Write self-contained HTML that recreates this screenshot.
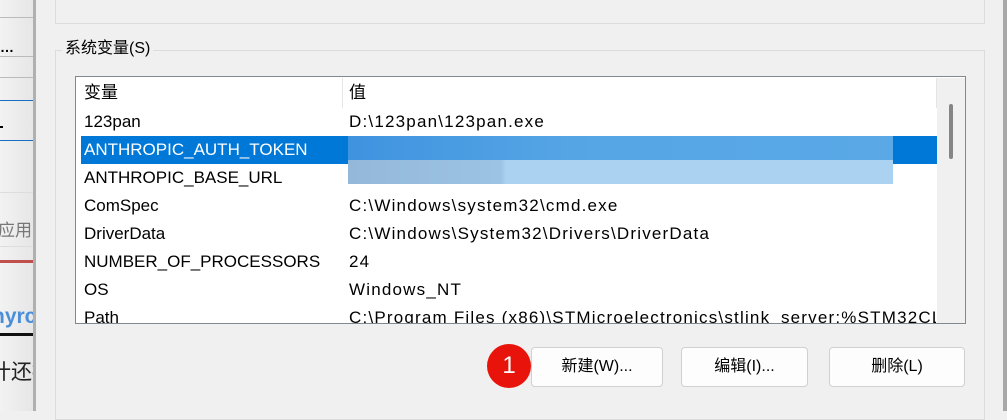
<!DOCTYPE html>
<html><head><meta charset="utf-8"><style>
*{margin:0;padding:0;box-sizing:border-box}
body{width:1007px;height:411px;overflow:hidden;background:#f0f0f0;position:relative;font-family:"Liberation Sans","Noto Sans CJK SC",sans-serif;color:#000}
.a{position:absolute}
.row{position:absolute;left:84px;font-size:17px;line-height:28px;white-space:nowrap}
.v{left:349px;letter-spacing:1.2px}
.btn{position:absolute;top:347px;height:40px;background:#fdfdfd;border:1px solid #d0d0d0;border-radius:4px;font-size:16px;text-align:center;line-height:38px}
</style></head><body>
<!-- left strip -->
<div class="a" style="left:0;top:0;width:34px;height:411px;overflow:hidden;background:linear-gradient(90deg,#f2f2f2,#e6e6e6)">
<div class="a" style="left:0;top:17px;width:34px;height:1px;background:#bbb"></div>
<div class="a" style="left:0;top:39px;font-size:14px;font-weight:bold">…</div>
<div class="a" style="left:0;top:56px;width:34px;height:1px;background:#bbb"></div>
<div class="a" style="left:0;top:77px;width:34px;height:1px;background:#bbb"></div>
<div class="a" style="left:0;top:100px;width:34px;height:1px;background:#1a6fc4"></div>
<div class="a" style="left:0;top:126px;width:3px;height:2px;background:#000"></div>
<div class="a" style="left:0;top:140px;width:34px;height:1px;background:#1a6fc4"></div>
<div class="a" style="left:0;top:192px;width:34px;height:1px;background:#ddd"></div>
<div class="a" style="left:-2px;top:216px;font-size:17px;color:#777;white-space:nowrap">应用</div>
<div class="a" style="left:0;top:246px;width:34px;height:1px;background:#ddd"></div>
<div class="a" style="left:0;top:260px;width:34px;height:3px;background:#c0504d"></div>
<div class="a" style="left:-8px;top:305px;font-size:21px;font-weight:bold;color:#4a8fd8;white-space:nowrap">hyrc</div>
<div class="a" style="left:0;top:333px;width:34px;height:3px;background:#111"></div>
<div class="a" style="left:-10px;top:356px;font-size:21px;color:#222;white-space:nowrap">计还损</div>
</div>
<div class="a" style="left:33px;top:0;width:3px;height:411px;background:#b0b0b0"></div>
<!-- right edge -->
<div class="a" style="left:1003px;top:0;width:4px;height:411px;background:#a8a8a8"></div>
<!-- upper group box -->
<div class="a" style="left:55px;top:-5px;width:930px;height:29px;border:1px solid #dcdcdc"></div>
<!-- system group -->
<div class="a" style="left:55px;top:50px;width:930px;height:370px;border:1px solid #dcdcdc"></div>
<div class="a" style="left:62px;top:38px;padding:0 3px;background:#f0f0f0;font-size:16px;line-height:22px">系统变量(S)</div>
<!-- listbox -->
<div class="a" style="left:75px;top:76px;width:891px;height:248px;border:1px solid #828790;background:#fff;overflow:hidden">
 <div class="a" style="left:266px;top:1px;width:1px;height:30px;background:#e5e5e5"></div>
 <div class="a" style="left:861px;top:1px;width:28px;height:246px;background:#f0f0f0"></div>
 <div class="a" style="left:860px;top:1px;width:1px;height:30px;background:#e5e5e5"></div>
 <div class="a" style="left:873px;top:27px;width:4px;height:55px;background:#858585;border-radius:2px"></div>
 <div class="a" style="left:5px;top:59px;width:856px;height:28px;background:#0078d7"></div>
</div>
<div class="row" style="top:79px">变量</div><div class="row v" style="top:79px">值</div>
<div class="row" style="top:108px">123pan</div><div class="row v" style="top:108px">D:\123pan\123pan.exe</div>
<div class="row" style="top:136px;color:#fff">ANTHROPIC_AUTH_TOKEN</div>
<div class="row" style="top:164px">ANTHROPIC_BASE_URL</div>
<div class="row" style="top:192px">ComSpec</div><div class="row v" style="top:192px">C:\Windows\system32\cmd.exe</div>
<div class="row" style="top:220px">DriverData</div><div class="row v" style="top:220px">C:\Windows\System32\Drivers\DriverData</div>
<div class="row" style="top:248px">NUMBER_OF_PROCESSORS</div><div class="row v" style="top:248px">24</div>
<div class="row" style="top:276px">OS</div><div class="row v" style="top:276px">Windows_NT</div>
<div class="a" style="left:76px;top:304px;width:860px;height:19px;overflow:hidden"><div class="row" style="left:8px;top:0">Path</div><div class="row v" style="left:273px;top:0">C:\Program Files (x86)\STMicroelectronics\stlink_server;%STM32CL</div></div>
<!-- blur overlay -->
<div class="a" style="left:348px;top:136px;width:545px;height:24px;background:linear-gradient(90deg,#3f93df,#55a5e5 40%,#5aa8e6)"></div>
<div class="a" style="left:348px;top:160px;width:545px;height:24px;background:linear-gradient(90deg,#93b8da,#9cc2e4 28%,#acd2f2 29%,#acd2f2)"></div>
<!-- buttons -->
<div class="btn" style="left:531px;width:132px">新建(W)...</div>
<div class="btn" style="left:681px;width:127px">编辑(I)...</div>
<div class="btn" style="left:829px;width:136px">删除(L)</div>
<div class="a" style="left:487px;top:344px;width:44px;height:44px;border-radius:50%;background:#e8140b;color:#fff;font-size:24px;text-align:center;line-height:44px">1</div>
</body></html>
